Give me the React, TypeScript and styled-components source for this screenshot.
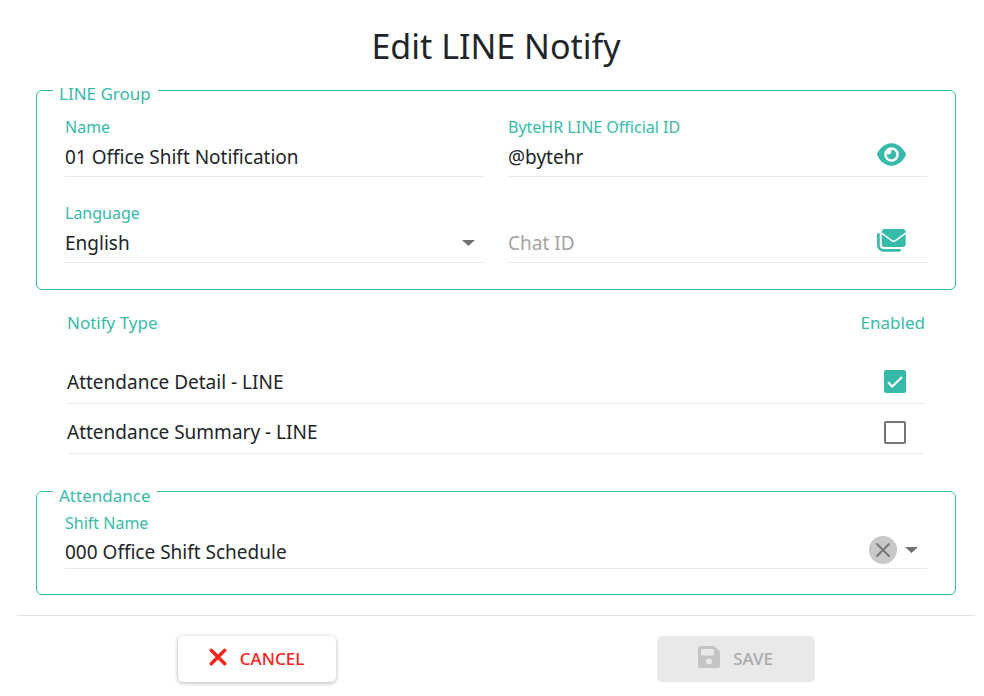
import React, { useState } from "react";
import styled, { createGlobalStyle } from "styled-components";
import { FaEye } from "react-icons/fa6";

const teal = "#36bbaa";
const ink = "#212529";
const line = "#e7e9ef";

const GlobalStyle = createGlobalStyle`
  * { box-sizing: border-box; }
  body {
    margin: 0;
    background: #fff;
    color: ${ink};
    font-family: "Noto Sans", "Open Sans", sans-serif;
    font-size: 19px;
  }
  button, input, select { font: inherit; color: inherit; }
`;

const Form = styled.form`
  padding: 20px 9px 14px 17px;
`;

const Title = styled.h1`
  margin: 0 0 4px;
  font-size: 34px;
  font-weight: 400;
  line-height: 52px;
  text-align: center;
`;

const Group = styled.fieldset`
  min-width: 0;
  margin: 0 19px;
  padding: 0 28px;
  border: 1px solid ${teal};
  border-radius: 6px;
`;

const Legend = styled.legend`
  margin-left: -12px;
  padding: 8px 7px 0 6px;
  color: ${teal};
  font-size: 17px;
  line-height: 20px;
`;

const Fields = styled.div<{ $columns: number; $top: number; $bottom: number }>`
  display: grid;
  grid-template-columns: repeat(${(p) => p.$columns}, minmax(0, 1fr));
  gap: 26px 24px;
  padding: ${(p) => p.$top}px 0 ${(p) => p.$bottom}px;
`;

const Field = styled.div`
  display: flex;
  flex-direction: column;
`;

const Label = styled.label`
  min-height: 20px;
  color: ${teal};
  font-size: 16px;
  line-height: 20px;
`;

const Control = styled.div<{ $height: number }>`
  display: flex;
  align-items: center;
  height: ${(p) => p.$height}px;
  border-bottom: 1px solid ${line};
`;

const TextInput = styled.input<{ $drop?: number }>`
  flex: 1;
  min-width: 0;
  height: 100%;
  padding: ${(p) => p.$drop ?? 0}px 0 0;
  border: 0;
  outline: 0;
  background: none;
  &::placeholder { color: #a3a3a3; opacity: 1; }
`;

const SelectBox = styled.div`
  display: grid;
  flex: 1;
  height: 100%;
  align-items: center;
  > * { grid-area: 1 / 1; }
  > svg { justify-self: end; margin-right: 9px; pointer-events: none; }
`;

const Select = styled.select`
  width: 100%;
  height: 100%;
  padding: 0;
  border: 0;
  outline: 0;
  background: none;
  appearance: none;
`;

const IconButton = styled.button`
  display: flex;
  padding: 0;
  border: 0;
  background: none;
  color: ${teal};
  margin: 0 21px 4px 0;
`;

const ClearButton = styled.button`
  display: grid;
  place-items: center;
  width: 28px;
  height: 28px;
  padding: 0;
  border: 0;
  border-radius: 50%;
  background: #c8c8c8;
  color: #777;
`;

const OpenButton = styled.button`
  display: flex;
  padding: 8px;
  margin-right: 1px;
  border: 0;
  background: none;
`;

const TableArea = styled.div`
  padding: 13px 50px 24px;
`;

const Table = styled.table`
  width: 100%;
  border-collapse: collapse;
`;

const Head = styled.th<{ $align: "left" | "right" }>`
  height: 50px;
  padding: 8px 0 0;
  vertical-align: top;
  color: ${teal};
  font-size: 17px;
  font-weight: 400;
  line-height: 24px;
  text-align: ${(p) => p.$align};
`;

const Cell = styled.td`
  height: 50px;
  padding: 8px 0 0;
  border-bottom: 1px solid #ececec;
  line-height: 24px;
`;

const Tick = styled.span`
  display: grid;
  width: 22px;
  margin: 0 19px 0 auto;
  place-items: center;
  > * { grid-area: 1 / 1; }
  > svg { pointer-events: none; }
`;

const Checkbox = styled.input`
  appearance: none;
  width: 22px;
  height: 23px;
  margin: 0;
  border: 2px solid #757575;
  border-radius: 2px;
  &:checked { border-color: ${teal}; background: ${teal}; }
`;

const Footer = styled.footer`
  display: grid;
  grid-template-columns: 1fr 1fr;
  justify-items: center;
  margin-top: 20px;
  padding-top: 20px;
  border-top: 1px solid #dfe1e3;
`;

const Action = styled.button`
  display: flex;
  align-items: center;
  justify-content: center;
  gap: 13px;
  width: 158px;
  height: 46px;
  border: 0;
  border-radius: 5px;
  background: #fff;
  color: #f9221a;
  font-size: 17px;
  font-weight: 500;
  box-shadow: 0 1px 4px rgba(0, 0, 0, 0.3);
  &:disabled {
    background: #e9e9e9;
    color: #a9a9a9;
    box-shadow: none;
  }
  > svg { margin-bottom: 3px; }
`;

const Caret = () => (
  <svg width="13" height="6" viewBox="0 0 13 6" aria-hidden="true">
    <path d="M0 0h13L6.500 6z" fill="#707070" />
  </svg>
);

const Mails = () => (
  <svg width="29" height="23" viewBox="0 0 29 23" fill="none" aria-hidden="true">
    <path d="M1.400 5.300V16a5.300 5.300 0 0 0 5.300 5.300H22.600" stroke="currentColor" strokeWidth="2.700" strokeLinecap="round" />
    <path d="M4.700 3.200A3.200 3.200 0 0 1 7.900 0h17.600a3.200 3.200 0 0 1 3.200 3.200v11.600a3.200 3.200 0 0 1-3.200 3.200H7.900a3.200 3.200 0 0 1-3.200-3.200z" fill="currentColor" />
    <path d="M4.200 3.900l10.700 7.800q1.800 1.200 3.600 0l10.700-7.800" stroke="#fff" strokeWidth="1.500" />
  </svg>
);

const Check = () => (
  <svg width="16" height="12" viewBox="0 0 16 12" fill="none" aria-hidden="true">
    <path d="M1 6.200l4.300 4.300L15 1" stroke="#fff" strokeWidth="2" />
  </svg>
);

const Cross = ({ size, weight }: { size: number; weight: number }) => (
  <svg width={size} height={size} viewBox="0 0 16 16" fill="none" aria-hidden="true">
    <path d="M2 2l12 12M14 2L2 14" stroke="currentColor" strokeWidth={weight} strokeLinecap="round" />
  </svg>
);

const Disk = () => (
  <svg width="22" height="22" viewBox="0 0 22 22" aria-hidden="true">
    <path
      fill="#c4c4c4"
      fillRule="evenodd"
      d="M2.500 0H16.500L22 5.500V19.500A2.500 2.500 0 0 1 19.500 22H2.500A2.500 2.500 0 0 1 0 19.500V2.500A2.500 2.500 0 0 1 2.500 0ZM4.500 3A1.500 1.500 0 0 0 3 4.500V8A1.500 1.500 0 0 0 4.500 9.500H14.500A1.500 1.500 0 0 0 16 8V4.500A1.500 1.500 0 0 0 14.500 3ZM11 12.500A3 3 0 1 0 11 18.500A3 3 0 1 0 11 12.500Z"
    />
  </svg>
);

const notifyTypes = [
  { id: "detail", label: "Attendance Detail - LINE", enabled: true },
  { id: "summary", label: "Attendance Summary - LINE", enabled: false },
];

export default function App() {
  const [shift, setShift] = useState("000 Office Shift Schedule");
  return (
    <>
      <GlobalStyle />
      <Form onSubmit={(e) => e.preventDefault()}>
        <Title>Edit LINE Notify</Title>

        <Group>
          <Legend>LINE Group</Legend>
          <Fields $columns={2} $top={13} $bottom={26}>
            <Field>
              <Label htmlFor="name">Name</Label>
              <Control $height={40}>
                <TextInput id="name" defaultValue="01 Office Shift Notification" />
              </Control>
            </Field>
            <Field>
              <Label htmlFor="official">ByteHR LINE Official ID</Label>
              <Control $height={40}>
                <TextInput id="official" defaultValue="@bytehr" />
                <IconButton type="button" aria-label="Show official ID">
                  <FaEye size={29} />
                </IconButton>
              </Control>
            </Field>
            <Field>
              <Label htmlFor="language">Language</Label>
              <Control $height={40}>
                <SelectBox>
                  <Select id="language" defaultValue="English">
                    <option>English</option>
                  </Select>
                  <Caret />
                </SelectBox>
              </Control>
            </Field>
            <Field>
              <Label htmlFor="chat" aria-label="Chat ID" />
              <Control $height={40}>
                <TextInput id="chat" placeholder="Chat ID" />
                <IconButton type="button" aria-label="Send message">
                  <Mails />
                </IconButton>
              </Control>
            </Field>
          </Fields>
        </Group>

        <TableArea>
          <Table>
            <thead>
              <tr>
                <Head scope="col" $align="left">Notify Type</Head>
                <Head scope="col" $align="right">Enabled</Head>
              </tr>
            </thead>
            <tbody>
              {notifyTypes.map((t) => (
                <tr key={t.id}>
                  <Cell>
                    <label htmlFor={t.id}>{t.label}</label>
                  </Cell>
                  <Cell>
                    <Tick>
                      <Checkbox type="checkbox" id={t.id} defaultChecked={t.enabled} />
                      <Check />
                    </Tick>
                  </Cell>
                </tr>
              ))}
            </tbody>
          </Table>
        </TableArea>

        <Group>
          <Legend>Attendance</Legend>
          <Fields $columns={1} $top={7} $bottom={25}>
            <Field>
              <Label htmlFor="shift">Shift Name</Label>
              <Control $height={36}>
                <TextInput id="shift" $drop={4} value={shift} onChange={(e) => setShift(e.target.value)} />
                <ClearButton type="button" aria-label="Clear shift" onClick={() => setShift("")}>
                  <Cross size={16} weight={2} />
                </ClearButton>
                <OpenButton type="button" aria-label="Open shift list">
                  <Caret />
                </OpenButton>
              </Control>
            </Field>
          </Fields>
        </Group>

        <Footer>
          <Action type="button">
            <Cross size={18} weight={3} />
            CANCEL
          </Action>
          <Action type="submit" disabled>
            <Disk />
            SAVE
          </Action>
        </Footer>
      </Form>
    </>
  );
}
